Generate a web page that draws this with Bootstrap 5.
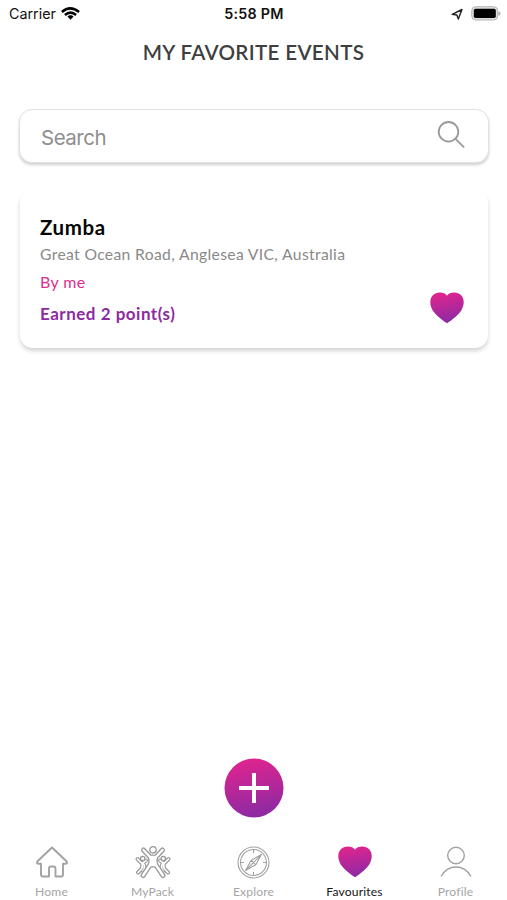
<!DOCTYPE html>
<html lang="en">
<head>
<meta charset="utf-8">
<meta name="viewport" content="width=device-width, initial-scale=1">
<title>My Favorite Events</title>
<link href="https://cdn.jsdelivr.net/npm/bootstrap@5.3.0/dist/css/bootstrap.min.css" rel="stylesheet">
<style>
body { font-family: Lato, "Open Sans", sans-serif; color: #111; background: #fff; }
.app { height: 900px; overflow: hidden; }
.status { height: 27px; font-family: Inter, sans-serif; font-size: 14.3px; padding: 0 6px 0 9px; }
.status > div { flex: 1 1 0; }
.clock { font-weight: 600; letter-spacing: .25px; padding-right: 2px; }
.page-title { height: 50px; line-height: 51px; font-size: 20.6px; font-weight: 600; color: #3f3f3f; letter-spacing: .32px; }
.search-box { margin: 32px 18px 0 19px; height: 54px; border: 1px solid #e2e2e2; border-radius: 13px; padding: 0 23px 0 21px; box-shadow: 0 2px 3px rgba(0,0,0,.19); }
.search-box input { font-family: Inter, sans-serif; font-size: 20.5px; letter-spacing: -.5px; line-height: 24px; margin-top: 3px; }
.search-box input::placeholder { color: #8e8e8e; opacity: 1; }
.event { margin: 27px 19px 0 20px; height: 158px; border: 0; border-radius: 13px; padding: 23px 24px 0 20px; box-shadow: 0 3px 4px rgba(0,0,0,.17); }
.event-name { font-size: 20.5px; line-height: 28px; font-weight: 700; color: #060606; letter-spacing: .6px; }
.place { font-size: 15.7px; line-height: 26px; color: #898989; white-space: nowrap; letter-spacing: .34px; }
.host { font-size: 16px; line-height: 30px; color: #dd2f8e; letter-spacing: .35px; }
.points { font-size: 17px; line-height: 33px; font-weight: 700; color: #8d2aa0; letter-spacing: .5px; }
.heart-spot { margin-top: 79px; }
.tabs { height: 82px; padding: 0 1px 0 1px; }
.tab { flex: 1 1 0; font-size: 12.100px; line-height: 16px; color: #a5a5a5; text-decoration: none; padding-top: 27px; letter-spacing: .15px; }
.tab svg { margin-bottom: 5px; }
.tab.active { color: #151515; }
svg { display: block; flex: none; }
.add { width: 60px; height: 60px; }
</style>
<script src="https://cdn.jsdelivr.net/npm/bootstrap@5.3.0/dist/js/bootstrap.bundle.min.js"></script>
</head>
<body>
<svg width="0" height="0" class="position-absolute" aria-hidden="true">
  <defs>
    <linearGradient id="brand" x1="0.4" y1="0" x2="0.6" y2="1"><stop offset="0" stop-color="#e0248e"/><stop offset="1" stop-color="#8a2aa4"/></linearGradient>
    <symbol id="heart" viewBox="0 0 34 32"><path fill="url(#brand)" d="M17 3.800C14.500-.2 6.300-.7 2.600 3.500C-1.300 8.100.100 15.400 4.200 20.500C7.500 24.700 12.500 28.300 17 31.200C21.500 28.300 26.500 24.700 29.800 20.500C33.900 15.400 35.300 8.100 31.400 3.500C27.700-.7 19.500-.2 17 3.800Z"/></symbol>
    <g id="side-figure"><path d="M3.500 14L8 18.500Q9 22 7.500 24L4 27.500M8 18.500L12 15.500M9 18Q12 22 9 26"/></g>
    <path id="centre-figure" d="M9.500 5L16 12H22L28.500 5M16 12Q18 17 15 21.500L9 30.500M22 12Q20 17 23 21.500L29 30.500M17 13V20L21 20V13M15.500 21L19 18L22.500 21"/>
  </defs>
</svg>
<div class="app d-flex flex-column">
  <header>
    <div class="status d-flex align-items-center">
      <div class="d-flex align-items-center"><span>Carrier</span>
        <svg class="ms-1" width="20" height="16" viewBox="0 0 20 16" fill="none" stroke="#000" stroke-width="2.500"><path d="M1.900 6Q10-1.200 19.100 6M4.900 9Q10.500 4.300 16.100 9"/><path d="M10.500 9.200c-1.300 0-2.200.5-3 1.300l3 3.300 3-3.300c-.8-.8-1.700-1.300-3-1.300z" fill="#000" stroke="none"/></svg>
      </div>
      <div class="clock text-center">5:58 PM</div>
      <div class="d-flex justify-content-end align-items-center">
        <svg class="me-2" width="12" height="12" viewBox="0 0 12 12" fill="none" stroke="#222" stroke-width="1.400" stroke-linejoin="round"><path d="M1.200 6.400L11 1.500 7.300 11 5.900 7z"/></svg>
        <svg width="30" height="15" viewBox="0 0 30 15"><rect x=".7" y=".7" width="26" height="13.300" rx="4" fill="#dedede" stroke="#b5b5b5"/><rect x="2.800" y="2.700" width="22" height="9.300" rx="1.800" fill="#000"/><path d="M27.500 5v5q2-1 2-2.500T27.500 5" fill="#aaa"/></svg>
      </div>
    </div>
    <h1 class="page-title text-center mb-0"><span>MY FAVORITE EVENTS</span></h1>
  </header>
  <main class="flex-grow-1 d-flex flex-column">
    <div class="search-box d-flex align-items-center bg-white">
      <input class="form-control border-0 p-0 shadow-none bg-transparent" type="text" placeholder="Search" aria-label="Search">
      <svg width="28" height="28" viewBox="0 0 28 28" fill="none" stroke="#999" stroke-width="1.800" class="mb-1"><circle cx="11.500" cy="11.800" r="9.800"/><path d="M18.500 18.800l8.600 8.600"/></svg>
    </div>
    <article class="event card flex-row justify-content-between">
      <div>
        <h2 class="event-name mb-0"><span>Zumba</span></h2>
        <div class="place"><span>Great Ocean Road, Anglesea VIC, Australia</span></div>
        <div class="host"><span>By me</span></div>
        <div class="points"><span>Earned 2 point(s)</span></div>
      </div>
      <svg class="heart-spot" width="34" height="32"><use href="#heart"/></svg>
    </article>
    <a href="#" class="add mt-auto mx-auto" aria-label="Add event"><svg width="60" height="60" viewBox="0 0 60 60"><circle cx="30" cy="30" r="29.500" fill="url(#brand)"/><path d="M30 15v30M15 30h30" stroke="#fff" stroke-width="4"/></svg></a>
  </main>
  <nav class="tabs d-flex">
    <a class="tab d-flex flex-column align-items-center" href="#"><svg width="34" height="34" viewBox="0 0 34 34" fill="none" stroke="#a2a2a2" stroke-width="1.900" stroke-linejoin="round"><path d="M17 2.500L2.300 16.500q-.9 1.900 1 2.300H6V29.500q0 2 2 2h6V23.500q0-2 2-2h2.500q2 0 2 2v8H26q2 0 2-2V18.800h2.700q1.900-.4 1-2.300z"/></svg><span>Home</span></a>
    <a class="tab d-flex flex-column align-items-center" href="#"><svg width="38" height="34" viewBox="0 0 38 34" fill="none" stroke-linejoin="round" stroke-linecap="round">
      <g stroke="#999" stroke-width="4"><use href="#side-figure"/><use href="#side-figure" transform="matrix(-1 0 0 1 38 0)"/></g>
      <g stroke="#fff" stroke-width="1.700"><use href="#side-figure"/><use href="#side-figure" transform="matrix(-1 0 0 1 38 0)"/></g>
      <use href="#centre-figure" stroke="#999" stroke-width="5"/>
      <use href="#centre-figure" stroke="#fff" stroke-width="2.400"/>
      <path d="M17 12h4v7l-2-1-2 1z" fill="#fff"/>
      <g stroke="#999" stroke-width="1.300" fill="#fff"><circle cx="19" cy="4.800" r="3.200"/><circle cx="8.700" cy="13.500" r="2.200"/><circle cx="29.300" cy="13.500" r="2.200"/></g>
    </svg><span>MyPack</span></a>
    <a class="tab d-flex flex-column align-items-center" href="#"><svg width="34" height="34" viewBox="0 0 34 34" fill="none" stroke="#a2a2a2" stroke-width="1.100" stroke-linejoin="round"><circle cx="16.500" cy="17.500" r="15.500"/><circle cx="16.500" cy="17.500" r="13"/><path d="M24.500 9.500l-5.700 10.300L8.500 25.500l5.700-10.300zM14.200 15.200l4.600 4.600M24.500 9.500L8.500 25.500M16.500 4.500V8M16.500 27v3.500M3.500 17.500H7M26 17.500h3.500"/></svg><span>Explore</span></a>
    <a class="tab active d-flex flex-column align-items-center" href="#"><svg width="34" height="34"><use href="#heart" width="34" height="32" y="1"/></svg><span>Favourites</span></a>
    <a class="tab d-flex flex-column align-items-center" href="#"><svg width="34" height="34" viewBox="0 0 34 34" fill="none" stroke="#a2a2a2" stroke-width="1.400"><circle cx="17" cy="10.500" r="8.300"/><path d="M2 31.500C5.500 25.200 10.500 22 17 22S28.500 25.200 32 31.500"/></svg><span>Profile</span></a>
  </nav>
</div>
</body>
</html>
